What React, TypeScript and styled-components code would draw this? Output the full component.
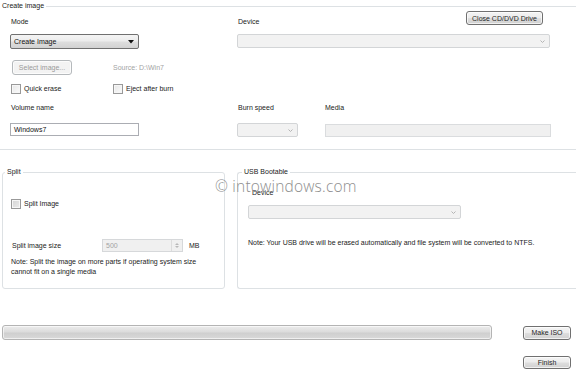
import styled, { createGlobalStyle } from 'styled-components';

const GlobalStyle = createGlobalStyle`
  html, body {
    margin: 0;
    padding: 0;
    background: #ffffff;
  }

  body {
    font-family: "Liberation Sans", Arial, sans-serif;
    font-size: 7px;
    color: #222222;
  }
`;

const Window = styled.div`
  position: relative;
  width: 576px;
  height: 372px;
  overflow: hidden;
  background: #ffffff;
  display: flex;
  flex-direction: column;
`;

const Group = styled.fieldset<{ $edges: 'band' | 'box' | 'open-right' }>`
  margin: 0;
  padding: 0;
  min-width: 0;
  box-sizing: border-box;
  border: 1px solid #dde1e4;
  border-radius: ${({ $edges }) => ($edges === 'band' ? '0' : '3px')};
  ${({ $edges }) => $edges === 'band' && 'border-left: none; border-right: none;'}
  ${({ $edges }) => $edges === 'open-right' && 'flex: 1; border-right: none; border-radius: 3px 0 0 3px;'}
`;

const Legend = styled.legend<{ $indent: number }>`
  padding: 0 2px;
  margin-left: ${({ $indent }) => $indent}px;
  line-height: 12px;
  font-size: 7px;
  color: #222222;
`;

const TopGrid = styled.div`
  display: grid;
  grid-template-columns: 102px 125px 87px 227px;
  grid-template-rows: 15px 22px 26px 19px 19px 24px;
  grid-template-areas:
    "mode . device close"
    "modesel modesel devsel devsel"
    "selbtn source . ."
    "quick eject . ."
    "vol . burn media"
    "volin volin burnin mediain";
  align-items: end;
  padding: 0 0 12px 10px;
`;

const Slot = styled.div<{ $area: string; $align?: string; $justify?: string; $offset?: string }>`
  grid-area: ${({ $area }) => $area};
  align-self: ${({ $align }) => $align || 'end'};
  justify-self: ${({ $justify }) => $justify || 'start'};
  margin: ${({ $offset }) => $offset || '0'};
  display: flex;
`;

const Label = styled.span<{ $muted?: boolean }>`
  display: block;
  line-height: 10px;
  padding-left: 1px;
  white-space: nowrap;
  color: ${({ $muted }) => ($muted ? '#a3a3a3' : '#222222')};
`;

const Button = styled.button<{ $width: number; $height: number; $disabled?: boolean }>`
  box-sizing: border-box;
  width: ${({ $width }) => $width}px;
  height: ${({ $height }) => $height}px;
  padding: 0;
  font-family: inherit;
  font-size: 7px;
  line-height: 1;
  border-radius: 3px;
  cursor: default;
  color: ${({ $disabled }) => ($disabled ? '#9a9a9a' : '#1e1e1e')};
  border: 1px solid ${({ $disabled }) => ($disabled ? '#b5b9bc' : '#707070')};
  background: ${({ $disabled }) =>
    $disabled
      ? '#f3f3f3'
      : 'linear-gradient(#f4f4f4 0%, #ececec 48%, #dedede 52%, #d0d0d0 100%)'};
  box-shadow: inset 0 0 0 1px rgba(255, 255, 255, 0.7);
`;

const ComboBox = styled.div<{ $width: number; $height: number; $disabled?: boolean }>`
  box-sizing: border-box;
  width: ${({ $width }) => $width}px;
  height: ${({ $height }) => $height}px;
  display: flex;
  align-items: center;
  justify-content: space-between;
  padding: 0 4px 0 3px;
  border-radius: 2px;
  border: 1px solid ${({ $disabled }) => ($disabled ? '#d3d5d7' : '#707070')};
  background: ${({ $disabled }) =>
    $disabled
      ? '#f2f2f2'
      : 'linear-gradient(#f4f4f4 0%, #ececec 48%, #dedede 52%, #d2d2d2 100%)'};
  color: #111111;
  white-space: nowrap;
`;

const TextBox = styled.div<{ $width: number; $height: number; $disabled?: boolean }>`
  box-sizing: border-box;
  width: ${({ $width }) => $width}px;
  height: ${({ $height }) => $height}px;
  display: flex;
  align-items: center;
  padding-left: 3px;
  border: 1px solid ${({ $disabled }) => ($disabled ? '#dadcde' : '#abadb3')};
  background: ${({ $disabled }) => ($disabled ? '#f0f0f0' : '#ffffff')};
  color: ${({ $disabled }) => ($disabled ? '#a0a0a0' : '#111111')};
`;

const CheckRow = styled.label`
  display: flex;
  align-items: center;
  gap: 3px;
  line-height: 10px;
  white-space: nowrap;
`;

const CheckBox = styled.span<{ $shaded?: boolean }>`
  box-sizing: border-box;
  width: 10px;
  height: 10px;
  border: 1px solid #999999;
  background: ${({ $shaded }) =>
    $shaded
      ? 'linear-gradient(135deg, #d4d4d4, #ececec)'
      : 'linear-gradient(135deg, #e6e6e6, #fbfbfb)'};
  box-shadow: inset 0 0 0 1px #f6f6f6;
`;

const MiddleRow = styled.div`
  display: flex;
  gap: 12px;
  margin-top: 16px;
  padding-left: 2px;
`;

const SplitBody = styled.div`
  width: 221px;
  display: flex;
  flex-direction: column;
  padding: 21px 0 11px 8px;
  box-sizing: border-box;
`;

const SizeRow = styled.div`
  display: grid;
  grid-template-columns: 91px 81px auto;
  align-items: center;
  margin-top: 30px;
`;

const Unit = styled.span`
  margin-left: 6px;
  line-height: 10px;
`;

const SpinBox = styled.div`
  box-sizing: border-box;
  height: 13px;
  display: flex;
  align-items: stretch;
  border: 1px solid #d6d8da;
  background: #f0f0f0;
  color: #a3a3a3;
`;

const SpinValue = styled.span`
  flex: 1;
  display: flex;
  align-items: center;
  padding-left: 3px;
`;

const SpinButtons = styled.span`
  width: 10px;
  display: flex;
  flex-direction: column;
  justify-content: center;
  align-items: center;
  gap: 1px;
  border-left: 1px solid #dcdcdc;
`;

const Note = styled.p<{ $top: number }>`
  margin: ${({ $top }) => $top}px 0 0;
  line-height: 10px;
  color: #222222;
`;

const UsbBody = styled.div`
  display: flex;
  flex-direction: column;
  padding: 10px 0 40px 10px;
`;

const UsbLabel = styled(Label)`
  margin-left: 3px;
`;

const Footer = styled.div`
  display: grid;
  grid-template-columns: 490px 48px;
  grid-template-rows: 15px 13px;
  grid-template-areas:
    "bar make"
    ". finish";
  column-gap: 31px;
  row-gap: 16px;
  align-items: center;
  margin-top: 36px;
  padding-left: 2px;
`;

const ProgressBar = styled.div`
  grid-area: bar;
  box-sizing: border-box;
  height: 15px;
  border: 1px solid #b4b4b4;
  border-radius: 3px;
  background: linear-gradient(#ececec 0%, #dcdcdc 45%, #cfcfcf 55%, #d9d9d9 100%);
  box-shadow: inset 0 0 0 1px rgba(255, 255, 255, 0.6);
`;

const FooterSlot = styled.div<{ $area: string }>`
  grid-area: ${({ $area }) => $area};
  display: flex;
`;

const Watermark = styled.div`
  position: absolute;
  left: 215px;
  top: 175px;
  font-family: "Open Sans", "DejaVu Sans", sans-serif;
  font-weight: 300;
  font-size: 15.5px;
  letter-spacing: 0.2px;
  color: #8e8e8e;
  pointer-events: none;
  white-space: nowrap;
`;

function Arrow ({ disabled }: { disabled?: boolean }) {
  return disabled
    ? (
      <svg width="5" height="3" viewBox="0 0 5 3">
        <path d="M0.5 0.5 L2.5 2.5 L4.5 0.5" fill="none" stroke="#b4b4b4" strokeWidth="1" />
      </svg>
    )
    : (
      <svg width="6" height="4" viewBox="0 0 6 4">
        <path d="M0 0 H6 L3 3.5 Z" fill="#111111" />
      </svg>
    );
}

function SpinArrows () {
  return (
    <SpinButtons>
      <svg width="4" height="2" viewBox="0 0 4 2"><path d="M0 2 L2 0 L4 2 Z" fill="#b8b8b8" /></svg>
      <svg width="4" height="2" viewBox="0 0 4 2"><path d="M0 0 L2 2 L4 0 Z" fill="#b8b8b8" /></svg>
    </SpinButtons>
  );
}

export default function App () {
  return (
    <>
      <GlobalStyle />
      <Window>
        <Group $edges="band">
          <Legend $indent={0}>Create image</Legend>
          <TopGrid>
            <Slot $area="mode"><Label>Mode</Label></Slot>
            <Slot $area="device"><Label>Device</Label></Slot>
            <Slot $area="close" $align="start" $justify="end" $offset="-1px 8px 0 0">
              <Button $width={77} $height={14}>Close CD/DVD Drive</Button>
            </Slot>

            <Slot $area="modesel">
              <ComboBox $width={129} $height={15}>
                <span>Create Image</span>
                <Arrow />
              </ComboBox>
            </Slot>
            <Slot $area="devsel" $offset="0 0 1px 0">
              <ComboBox $width={313} $height={14} $disabled>
                <span />
                <Arrow disabled />
              </ComboBox>
            </Slot>

            <Slot $area="selbtn" $offset="0 0 0 2px">
              <Button $width={60} $height={15} $disabled>Select image...</Button>
            </Slot>
            <Slot $area="source" $offset="0 0 2px 0"><Label $muted>Source: D:\Win7</Label></Slot>

            <Slot $area="quick" $offset="0 0 0 1px">
              <CheckRow><CheckBox />Quick erase</CheckRow>
            </Slot>
            <Slot $area="eject" $offset="0 0 0 1px">
              <CheckRow><CheckBox />Eject after burn</CheckRow>
            </Slot>

            <Slot $area="vol"><Label>Volume name</Label></Slot>
            <Slot $area="burn"><Label>Burn speed</Label></Slot>
            <Slot $area="media"><Label>Media</Label></Slot>

            <Slot $area="volin" $offset="0 0 1px 0">
              <TextBox $width={129} $height={13}>Windows7</TextBox>
            </Slot>
            <Slot $area="burnin">
              <ComboBox $width={61} $height={14} $disabled>
                <span />
                <Arrow disabled />
              </ComboBox>
            </Slot>
            <Slot $area="mediain" $offset="0 0 0 1px">
              <TextBox $width={226} $height={13} $disabled />
            </Slot>
          </TopGrid>
        </Group>

        <MiddleRow>
          <Group $edges="box">
            <Legend $indent={2}>Split</Legend>
            <SplitBody>
              <CheckRow><CheckBox $shaded />Split Image</CheckRow>
              <SizeRow>
                <Label>Split image size</Label>
                <SpinBox>
                  <SpinValue>500</SpinValue>
                  <SpinArrows />
                </SpinBox>
                <Unit>MB</Unit>
              </SizeRow>
              <Note $top={5}>
                Note: Split the image on more parts if operating system size
                <br />
                cannot fit on a single media
              </Note>
            </SplitBody>
          </Group>

          <Group $edges="open-right">
            <Legend $indent={4}>USB Bootable</Legend>
            <UsbBody>
              <UsbLabel>Device</UsbLabel>
              <Note $top={7} as="div">
                <ComboBox $width={213} $height={14} $disabled>
                  <span />
                  <Arrow disabled />
                </ComboBox>
              </Note>
              <Note $top={19}>
                Note: Your USB drive will be erased automatically and file system will be converted to NTFS.
              </Note>
            </UsbBody>
          </Group>
        </MiddleRow>

        <Footer>
          <ProgressBar />
          <FooterSlot $area="make">
            <Button $width={48} $height={14}>Make ISO</Button>
          </FooterSlot>
          <FooterSlot $area="finish">
            <Button $width={48} $height={13}>Finish</Button>
          </FooterSlot>
        </Footer>

        <Watermark>© intowindows.com</Watermark>
      </Window>
    </>
  );
}
